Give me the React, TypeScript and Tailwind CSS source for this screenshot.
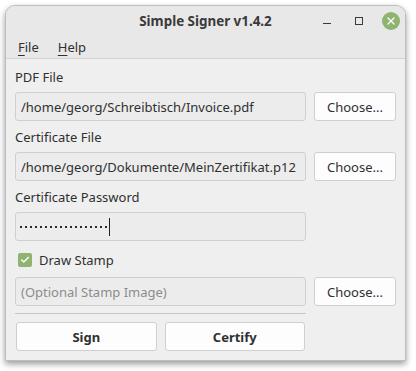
import { Check, X } from 'lucide-react';

function PathRow({ value, placeholder }: { value?: string; placeholder?: string }) {
  return (
    <div className="flex gap-[8px]">
      <div className="w-[291px] h-[29px] rounded-[3px] border border-[#cfcfcf] bg-[#ececec] px-[5px] flex items-center">
        {value ? (
          <span className="text-[#303030]">{value}</span>
        ) : (
          <span className="text-[#8c8c8c]">{placeholder}</span>
        )}
      </div>
      <button className="w-[82px] h-[29px] rounded-[3px] border border-[#cfcfcf] bg-[#fdfdfd] text-[#303030]">
        Choose...
      </button>
    </div>
  );
}

export default function App() {
  return (
    <div
      className="w-[416px] h-[371px] bg-white pt-[5px] pl-[5px] text-[13px] leading-[18px]"
      style={{ fontFamily: '"Noto Sans", "Open Sans", sans-serif' }}
    >
      <div className="w-[401px] h-[356px] rounded-t-[10px] border border-[#bdbdbd] bg-[#efefef] shadow-[0_3px_6px_rgba(0,0,0,0.4)] overflow-hidden flex flex-col">
        {/* Title bar */}
        <div className="h-[30px] bg-[#e8e8e8] grid grid-cols-[1fr_auto_1fr] items-center">
          <div />
          <div className="font-bold text-[13.4px] text-[#3a3a3a]">Simple Signer v1.4.2</div>
          <div className="flex justify-end items-center gap-[8px] pr-[2px]">
            <div className="w-[24px] h-[24px] flex items-center justify-center">
              <div className="w-[8px] h-[1px] bg-[#3a3a3a] mt-[5px]" />
            </div>
            <div className="w-[24px] h-[24px] flex items-center justify-center">
              <div className="w-[8px] h-[8px] border border-[#3a3a3a]" />
            </div>
            <div className="w-[24px] h-[24px] flex items-center justify-center">
              <div className="w-[18px] h-[18px] rounded-full bg-[#8fb46f] flex items-center justify-center">
                <X className="w-[12px] h-[12px] text-white" strokeWidth={2.5} />
              </div>
            </div>
          </div>
        </div>

        {/* Menu */}
        <div className="h-[23px] bg-[#e8e8e8] border-b border-[#d2d2d2] flex items-center gap-[19px] pl-[12px] text-[#303030]">
          <span>
            <span className="underline underline-offset-[3px]">F</span>ile
          </span>
          <span>
            <span className="underline underline-offset-[3px]">H</span>elp
          </span>
        </div>

        {/* Body */}
        <div className="px-[9px] pt-[9px] text-[#303030]">
          <div className="mb-[6px]">PDF File</div>
          <PathRow value="/home/georg/Schreibtisch/Invoice.pdf" />

          <div className="mt-[7px] mb-[6px]">Certificate File</div>
          <PathRow value="/home/georg/Dokumente/MeinZertifikat.p12" />

          <div className="mt-[7px] mb-[6px]">Certificate Password</div>
          <div className="w-[291px] h-[29px] rounded-[3px] border border-[#cfcfcf] bg-[#ececec] pl-[4px] flex items-center">
            <div className="flex gap-[3px]">
              {Array.from({ length: 18 }).map((_, i) => (
                <span key={i} className="w-[2px] h-[2px] bg-[#2a2a2a]" />
              ))}
            </div>
            <div className="w-[1px] h-[18px] bg-[#202020] ml-[2px]" />
          </div>

          <div className="mt-[7px] h-[24px] flex items-center gap-[7px] pl-[3px]">
            <div className="w-[14px] h-[14px] rounded-[2px] bg-[#8fb46f] flex items-center justify-center">
              <Check className="w-[10px] h-[10px] text-white" strokeWidth={3.5} />
            </div>
            <span>Draw Stamp</span>
          </div>

          <div className="mt-[5px]">
            <PathRow placeholder="(Optional Stamp Image)" />
          </div>

          <div className="w-[291px] h-[1px] bg-[#c8c8c8] mt-[7px]" />

          <div className="w-[291px] px-[1px] mt-[8px] flex gap-[8px]">
            <button className="flex-1 h-[29px] rounded-[3px] border border-[#cfcfcf] bg-[#fdfdfd] font-bold text-[#303030]">
              Sign
            </button>
            <button className="flex-1 h-[29px] rounded-[3px] border border-[#cfcfcf] bg-[#fdfdfd] font-bold text-[#303030]">
              Certify
            </button>
          </div>
        </div>
      </div>
    </div>
  );
}
